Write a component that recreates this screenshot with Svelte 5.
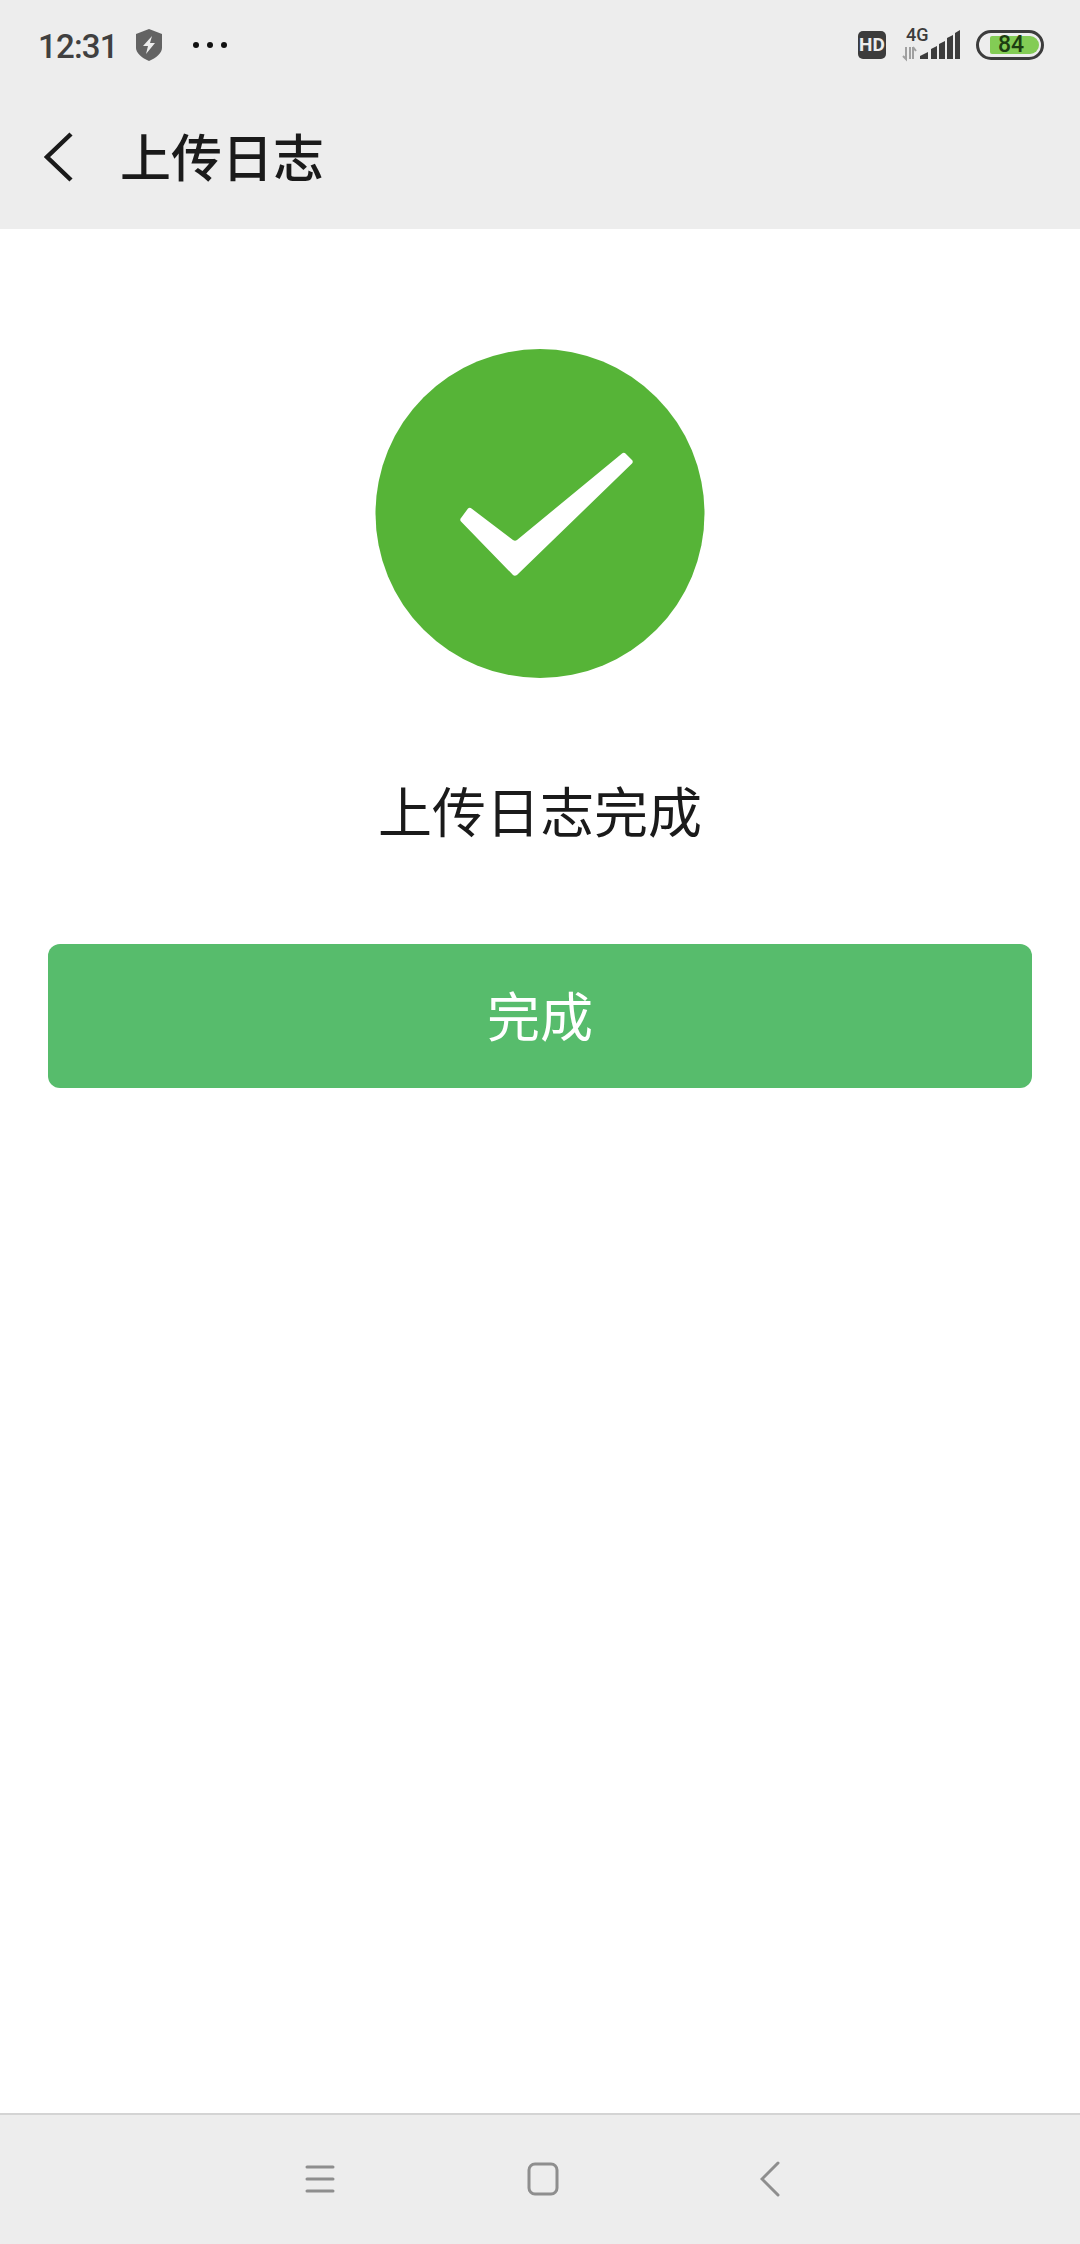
<script>
  const bars = [
    'M920 59v-3l8-4v7z',
    'M931 59V49l6-3v13z',
    'M939 59V44l6-3v18z',
    'M947 59V38l6-3v24z',
    'M955 59V33l5-3v29z',
  ];
</script>

<div class="page">
  <header class="top">
    <div class="status">
      <div class="status-left">
        <span class="time">12:31</span>
        <svg class="shield" width="30" height="34" viewBox="0 0 30 34">
          <path d="M15 1l13 5v14c0 5-6 10-13 13C8 30 2 25 2 20V6z" fill="#636363" />
          <path d="M18 8L9 18h5l-2 8 9-11h-5z" fill="#ededed" />
        </svg>
        <div class="dots"><i></i><i></i><i></i></div>
      </div>
      <div class="status-right">
        <span class="hd">HD</span>
        <div class="signal">
          <svg width="60" height="34" viewBox="900 28 60 34">
            <path d="M906 47v12l-3-3M910 59V47M913 47v12M913 47l3 4" fill="none" stroke="#a0a0a0" stroke-width="2" />
            {#each bars as d}
              <path {d} fill="#3c3c3c" />
            {/each}
          </svg>
          <span class="net">4G</span>
        </div>
        <div class="battery">
          <div class="fill">84</div>
        </div>
      </div>
    </div>
    <div class="title-bar">
      <svg class="back" width="30" height="52" viewBox="0 0 30 52">
        <path d="M27 3L3 26l24 23" fill="none" stroke="#1a1a1a" stroke-width="4.500" />
      </svg>
      <h1>上传日志</h1>
    </div>
  </header>

  <main>
    <svg class="check" width="330" height="330" viewBox="0 0 330 330">
      <circle cx="165" cy="164.500" r="164.500" fill="#56b437" />
      <path
        d="M247 104.500c1-1 2.500-1 3.500 0l6.500 6.500c1 1 1 2.500 0 3.500L142 226c-1.500 1-3 1-4 0L86 172.500c-1-1-1-2.500 0-3.500l7-9.500c1-1 2.500-1 3.500 0L138 191c1.500 1 2.500 1 4 0z"
        fill="#fff"
      />
    </svg>
    <p class="message">上传日志完成</p>
    <button type="button" class="done">完成</button>
  </main>

  <nav class="nav">
    <svg width="30" height="28" viewBox="0 0 30 28">
      <path d="M2 2h26M2 14h26M2 26h26" stroke="#8e8e8e" stroke-width="3" stroke-linecap="round" />
    </svg>
    <svg width="32" height="34" viewBox="0 0 32 34">
      <rect x="2" y="2" width="28" height="30" rx="6" fill="none" stroke="#8e8e8e" stroke-width="3" />
    </svg>
    <svg width="20" height="36" viewBox="0 0 20 36">
      <path d="M18 2L2 18l16 16" fill="none" stroke="#8e8e8e" stroke-width="3" stroke-linecap="round" />
    </svg>
  </nav>
</div>

<style>
  :global(body) {
    margin: 0;
    background: #fff;
  }

  .page {
    width: 1080px;
    height: 2244px;
    display: flex;
    flex-direction: column;
    font-family: "Noto Sans CJK SC", "Noto Sans", sans-serif;
    color: #1a1a1a;
  }

  .top {
    height: 229px;
    background: #ededed;
    display: flex;
    flex-direction: column;
  }

  .status {
    height: 90px;
    display: flex;
    align-items: center;
    justify-content: space-between;
    padding: 0 36px 0 38px;
  }

  .status-left,
  .status-right {
    display: flex;
    align-items: center;
  }

  .time {
    font-family: Roboto, sans-serif;
    font-size: 33px;
    font-weight: 500;
    letter-spacing: -0.8px;
    color: #404040;
    width: 96px;
    margin-top: 2px;
  }

  .dots {
    display: flex;
    gap: 8px;
    margin-left: 29px;
  }

  .dots i {
    width: 6px;
    height: 6px;
    border-radius: 50%;
    background: #111;
  }

  .hd {
    width: 28px;
    height: 28px;
    border-radius: 5px;
    background: #3c3c3c;
    color: #ededed;
    font-family: Roboto, sans-serif;
    font-size: 19px;
    font-weight: 700;
    line-height: 28px;
    text-align: center;
  }

  .signal {
    position: relative;
    width: 60px;
    height: 34px;
    margin-left: 14px;
  }

  .signal svg {
    display: block;
  }

  .net {
    position: absolute;
    left: 6px;
    top: -2px;
    font-family: Roboto, sans-serif;
    font-size: 18px;
    font-weight: 500;
    line-height: 18px;
    color: #3c3c3c;
  }

  .battery {
    width: 68px;
    height: 30px;
    box-sizing: border-box;
    margin-left: 16px;
    border: 3px solid #3c3c3c;
    border-radius: 15px;
    padding: 3px 2px 3px 11px;
    display: flex;
  }

  .fill {
    flex: 1;
    background: #83cc55;
    border-radius: 2px 9px 9px 2px;
    color: #1d3d12;
    font-family: Roboto, sans-serif;
    font-size: 23px;
    font-weight: 500;
    line-height: 18px;
    text-align: center;
    padding-right: 7px;
  }

  .title-bar {
    height: 134px;
    display: flex;
    align-items: center;
    padding-left: 44px;
  }

  .back {
    display: block;
  }

  h1 {
    margin: 0 0 4px 46px;
    font-size: 51px;
    font-weight: 500;
    line-height: 70px;
  }

  main {
    flex: 1;
    display: flex;
    flex-direction: column;
    align-items: center;
    padding-top: 120px;
  }

  .check {
    display: block;
  }

  .message {
    margin: 93px 0 0;
    font-size: 54px;
    line-height: 76px;
  }

  .done {
    width: 984px;
    height: 144px;
    margin-top: 96px;
    padding: 0 0 4px;
    border: none;
    border-radius: 12px;
    background: #57bc6c;
    color: #fff;
    font-family: inherit;
    font-size: 53px;
  }

  .nav {
    height: 131px;
    box-sizing: border-box;
    padding: 0 0 2px 305px;
    border-top: 2px solid #d4d4d4;
    background: #ededed;
    display: grid;
    grid-template-columns: 30px 32px 20px;
    align-items: center;
    column-gap: 192px;
  }

  .nav svg {
    display: block;
  }

  .nav svg:last-child {
    margin-left: 9px;
  }
</style>
